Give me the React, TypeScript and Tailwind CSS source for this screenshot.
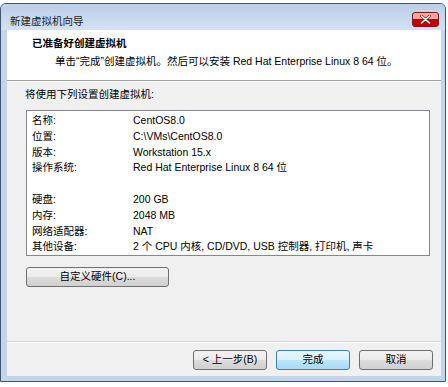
import React from 'react';

const font = { fontFamily: '"Liberation Sans", "Noto Sans CJK SC", sans-serif' };

const rows: [string, string][] = [
  ['名称:', 'CentOS8.0'],
  ['位置:', 'C:\\VMs\\CentOS8.0'],
  ['版本:', 'Workstation 15.x'],
  ['操作系统:', 'Red Hat Enterprise Linux 8 64 位'],
  ['', ''],
  ['硬盘:', '200 GB'],
  ['内存:', '2048 MB'],
  ['网络适配器:', 'NAT'],
  ['其他设备:', '2 个 CPU 内核, CD/DVD, USB 控制器, 打印机, 声卡'],
];

const WinButton: React.FC<{ label: string; primary?: boolean; className?: string }> = ({ label, primary, className }) => (
  <div
    className={
      'h-[20px] flex items-center justify-center rounded-[3px] border text-[10.5px] text-black ' +
      (primary
        ? 'border-[#3c7fb1] bg-[linear-gradient(#eaf6fd,#d9f0fc_50%,#bee6fd_50%,#a7d9f5)] '
        : 'border-[#707070] bg-[linear-gradient(#f2f2f2,#ebebeb_50%,#dddddd_50%,#cfcfcf)] ') +
      (className ?? '')
    }
  >
    {label}
  </div>
);

function CloseButton() {
  return (
    <div className="w-[27px] h-[15px] rounded-[3px] border border-red-900 bg-red-700 flex flex-col overflow-hidden">
      <div className="h-[6px] bg-red-300 flex-none" />
      <div className="flex-1 bg-red-700" />
    </div>
  );
}

export default function App() {
  return (
    <div className="w-[448px] h-[387px] bg-white pt-[3px] overflow-hidden" style={font}>
      <div className="w-[446px] flex flex-col rounded-t-[6px] border border-[#3e5670] bg-[#c4d5ea]">
        {/* Title bar */}
        <div className="h-[26px] flex items-start justify-between pt-[8px] pl-[9px] pr-[6px] bg-[linear-gradient(#bccfe8,#d3e1f1)] rounded-t-[5px]">
          <span className="mt-px text-[10.5px] leading-[16px] text-[#1e1e1e]">新建虚拟机向导</span>
          <div className="relative">
            <CloseButton />
            <svg className="absolute left-[8px] top-[3px]" width="11" height="9" viewBox="0 0 11 9">
              <path d="M1.5 1 L9.5 8 M9.5 1 L1.5 8" stroke="#6a2a20" strokeWidth="2.8" strokeLinecap="round" />
              <path d="M1.5 1 L9.5 8 M9.5 1 L1.5 8" stroke="#ffffff" strokeWidth="1.5" strokeLinecap="round" />
            </svg>
          </div>
        </div>

        {/* Client area */}
        <div className="ml-[6px] mr-[4px] h-[346px] flex flex-col bg-[#f0f0f0]">
          {/* Header */}
          <div className="h-[50px] bg-white flex flex-col pt-[5px]">
            <div className="pl-[25px] text-[10.5px] leading-[16px] font-bold text-black">已准备好创建虚拟机</div>
            <div className="pl-[48px] mt-[2px] text-[10.5px] leading-[16px] text-black">
              单击“完成”创建虚拟机。然后可以安装 Red Hat Enterprise Linux 8 64 位。
            </div>
          </div>
          <div className="h-px bg-[#a0a0a0]" />
          <div className="h-px bg-white" />

          {/* Body */}
          <div className="flex-1 flex flex-col pl-[19px] pt-[4px]">
            <div className="ml-[-1px] text-[10.5px] leading-[16px] text-black">将使用下列设置创建虚拟机:</div>
            <div className="mt-[8px] w-[404px] h-[146px] border border-[#828790] bg-white pl-[5px] pt-[2px]">
              {rows.map(([k, v], i) => (
                <div key={i} className="flex h-[15.8px] leading-[15.8px] text-[10.5px] text-black">
                  <span className="w-[101px] shrink-0">{k}</span>
                  <span>{v}</span>
                </div>
              ))}
            </div>
            <WinButton label="自定义硬件(C)..." className="mt-[11px] w-[143px]" />
          </div>

          {/* Footer */}
          <div className="h-px bg-[#d5d5d5]" />
          <div className="h-px bg-white" />
          <div className="h-[33px] flex justify-end gap-[9px] pt-[7px] pr-[8px]">
            <WinButton label="< 上一步(B)" className="w-[74px]" />
            <WinButton label="完成" primary className="w-[74px]" />
            <WinButton label="取消" className="w-[74px]" />
          </div>
        </div>
        <div className="h-[5px]" />
      </div>
    </div>
  );
}
